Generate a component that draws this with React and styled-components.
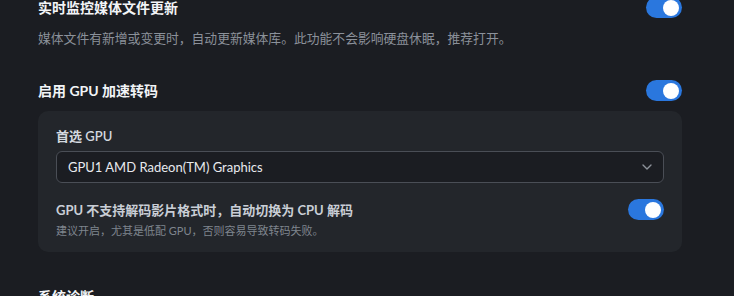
import React, { useState } from "react";
import styled, { createGlobalStyle } from "styled-components";
import { ChevronDown } from "lucide-react";

const GlobalStyle = createGlobalStyle`
  body {
    margin: 0;
    background: #1b1d22;
    font-family: "Segoe UI", Lato, "Noto Sans CJK SC", sans-serif;
    overflow: hidden;
  }
`;

const Page = styled.div`
  padding: 0 52px 0 38px;
  margin-top: -3px;
`;

const Section = styled.div`
  margin-bottom: ${({ gap }) => gap || 0}px;
`;

const Row = styled.div`
  display: flex;
  align-items: center;
  justify-content: space-between;
  min-height: 20px;
`;

const Title = styled.div`
  font-size: 14px;
  font-weight: 700;
  line-height: 20px;
  color: #f2f4f7;
`;

const Desc = styled.div`
  margin-top: 10px;
  font-size: 12.8px;
  line-height: 20px;
  color: #8b919a;
`;

const Card = styled.div`
  margin-top: 10px;
  background: #23262b;
  border-radius: 10px;
  padding: 16px 18px 13px;
`;

const Label = styled.div`
  font-size: 13px;
  font-weight: 600;
  line-height: 18px;
  color: #d3d8df;
`;

const Select = styled.div`
  margin-top: 6px;
  height: 32px;
  box-sizing: border-box;
  border: 1px solid #4a4e56;
  border-radius: 6px;
  background: #1b1d22;
  display: flex;
  align-items: center;
  justify-content: space-between;
  padding: 0 8px 0 11px;
  font-size: 13px;
  color: #e8eaee;

  svg {
    color: #8d929a;
  }
`;

const OptionRow = styled(Row)`
  margin-top: 16px;
`;

const OptionTitle = styled.div`
  font-size: 13px;
  font-weight: 700;
  line-height: 18px;
  color: #c9ced6;
`;

const OptionSub = styled.div`
  margin-top: 3px;
  font-size: 11px;
  line-height: 16px;
  color: #7f858e;
`;

const Track = styled.button`
  width: 36px;
  height: 21px;
  border: none;
  padding: 0;
  border-radius: 11px;
  background: ${({ on }) => (on ? "#2a77de" : "#4a4e56")};
  position: relative;
  cursor: pointer;
  flex-shrink: 0;
`;

const Knob = styled.span`
  position: absolute;
  top: 2.5px;
  left: ${({ on }) => (on ? "17px" : "3px")};
  width: 16px;
  height: 16px;
  border-radius: 50%;
  background: #ffffff;
`;

function Toggle({ initial = true }) {
  const [on, setOn] = useState(initial);
  return (
    <Track on={on ? 1 : 0} onClick={() => setOn(!on)}>
      <Knob on={on ? 1 : 0} />
    </Track>
  );
}

export default function App() {
  return (
    <>
      <GlobalStyle />
      <Page>
        <Section gap={32}>
          <Row>
            <Title>实时监控媒体文件更新</Title>
            <Toggle />
          </Row>
          <Desc>媒体文件有新增或变更时，自动更新媒体库。此功能不会影响硬盘休眠，推荐打开。</Desc>
        </Section>

        <Section gap={35}>
          <Row>
            <Title>启用 GPU 加速转码</Title>
            <Toggle />
          </Row>
          <Card>
            <Label>首选 GPU</Label>
            <Select>
              <span>GPU1 AMD Radeon(TM) Graphics</span>
              <ChevronDown size={16} strokeWidth={2} />
            </Select>
            <OptionRow>
              <OptionTitle>GPU 不支持解码影片格式时，自动切换为 CPU 解码</OptionTitle>
              <Toggle />
            </OptionRow>
            <OptionSub>建议开启，尤其是低配 GPU，否则容易导致转码失败。</OptionSub>
          </Card>
        </Section>

        <Section>
          <Title>系统诊断</Title>
        </Section>
      </Page>
    </>
  );
}
